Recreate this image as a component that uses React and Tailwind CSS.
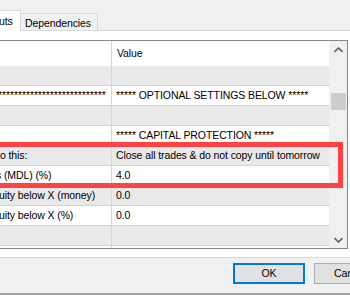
import React from 'react';

const rows = [
  { left: '', right: '' },
  { left: '***************************', right: '***** OPTIONAL SETTINGS BELOW *****', lx: 'ml-[-2px]' },
  { left: '', right: '' },
  { left: '', right: '***** CAPITAL PROTECTION *****' },
  { left: 'o this:', right: 'Close all trades & do not copy until tomorrow', lx: 'ml-[0px]' },
  { left: 's (MDL) (%)', right: '4.0', lx: 'ml-[-4px]' },
  { left: 'uity below X (money)', right: '0.0', lx: 'ml-[-1px]' },
  { left: 'uity below X (%)', right: '0.0', lx: 'ml-[-1px]' },
  { left: '', right: '' },
];

const Chevron = ({ down }) => (
  <svg width="9" height="6" viewBox="0 0 9 6" className={down ? 'rotate-180' : ''}>
    <path d="M0.5 5 L4.5 1 L8.5 5" fill="none" stroke="#606060" strokeWidth="1.6" />
  </svg>
);

const App = () => {
  return (
    <div className="relative w-[350px] h-[295px] overflow-hidden bg-[#f0f0f0] font-['Liberation_Sans',Arial,sans-serif] text-[10.5px] tracking-[-0.1px] text-black">
      {/* Tabs */}
      <div className="flex items-end h-[30px]">
        <div className="relative z-10 -mb-px h-[21px] w-[21px] bg-white border-t border-r border-[#d9d9d9] overflow-hidden">
          <span className="block pt-[3px] ml-[-1px] whitespace-nowrap">uts</span>
        </div>
        <div className="h-[17px] w-[77px] border-t border-r border-[#d9d9d9] bg-[#f0f0f0] pl-[4px] pt-[2px] whitespace-nowrap">
          Dependencies
        </div>
      </div>

      {/* Tab page */}
      <div className="h-[228px] bg-white border-y border-[#d9d9d9] pt-[9px]">
        <div className="flex w-[348px] h-[209px] border-y border-r border-[#828790]">
          <div className="w-[329px] flex flex-col overflow-hidden">
            <div className="flex h-[25px] shrink-0">
              <div className="w-[112px] border-r border-[#d6d6d6]" />
              <div className="flex items-center pl-[5px]">Value</div>
            </div>
            {rows.map((r, i) => (
              <div
                key={i}
                className={`flex h-[20px] shrink-0 border-b border-[#d0d0d0] ${i % 2 === 0 ? 'bg-[#e9e9e9]' : 'bg-white'}`}
              >
                <div className="w-[112px] shrink-0 border-r border-[#d6d6d6] overflow-hidden flex items-center">
                  <span className={`whitespace-nowrap ${r.lx || ''}`}>{r.left}</span>
                </div>
                <div className="flex items-center pl-[4px] whitespace-nowrap">{r.right}</div>
              </div>
            ))}
            <div className="flex flex-1">
              <div className="w-[112px] border-r border-[#d6d6d6]" />
            </div>
          </div>
          {/* Scrollbar */}
          <div className="w-[18px] bg-[#f0f0f0] flex flex-col">
            <div className="h-[17px] flex items-center justify-center pl-px">
              <Chevron />
            </div>
            <div className="flex-1 pt-[35px]">
              <div className="ml-[2px] w-[15px] h-[17px] bg-[#cdcdcd]" />
            </div>
            <div className="h-[17px] flex items-center justify-center pl-px">
              <Chevron down />
            </div>
          </div>
        </div>
      </div>

      {/* Buttons */}
      <div className="flex pl-[233px] pt-[5px] gap-[9px]">
        <button className="w-[72px] h-[21px] shrink-0 border-2 border-[#0078d7] bg-[#e1e1e1] text-[10.5px] leading-none">
          OK
        </button>
        <button className="w-[72px] h-[21px] shrink-0 border border-[#adadad] bg-[#e1e1e1] text-[10.5px] leading-none">
          Cancel
        </button>
      </div>

      <div className="absolute left-0 right-0 bottom-0 h-[2px] bg-[#a0a0a0]" />

      {/* Annotation box */}
      <div className="absolute left-[-10px] top-[142px] w-[353px] h-[46px] border-[5px] border-[#ff4343]" />
    </div>
  );
};

export default App;
